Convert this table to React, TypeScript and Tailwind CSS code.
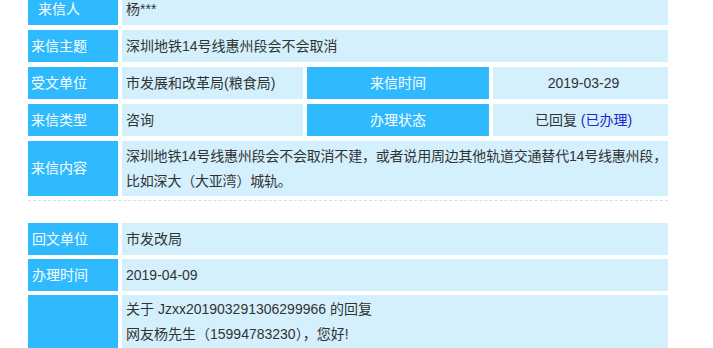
// 信件详情：来信信息 + 回复信息 两张表
import React from "react";

const FONT = "font-['Liberation_Sans','Noto_Sans_CJK_SC',sans-serif]";

// 蓝底白字的标签格
function Label({ children, className = "" }: { children?: React.ReactNode; className?: string }) {
  return (
    <div className={`flex items-center bg-[#2fbaff] text-[14px] text-white ${className}`}>
      {children}
    </div>
  );
}

// 浅蓝底的内容格
function Value({ children, className = "" }: { children?: React.ReactNode; className?: string }) {
  return (
    <div className={`flex items-center bg-[#d4f0fd] text-[14px] text-[#333] ${className}`}>
      {children}
    </div>
  );
}

export default function App() {
  return (
    <div className={`h-[348px] w-[713px] overflow-hidden bg-white ${FONT}`}>
      <div className="ml-[28px] w-[640px]">
        {/* 来信信息 */}
        <div className="-mt-[7px] grid auto-rows-[32px] grid-cols-[90px_181px_182px_175px] gap-x-[4px] gap-y-[5px]">
          <Label className="pl-[10px]">来信人</Label>
          <Value className="col-span-3 pl-[4px]">杨***</Value>

          <Label className="pl-[3px]">来信主题</Label>
          <Value className="col-span-3 pl-[4px]">深圳地铁14号线惠州段会不会取消</Value>

          <Label className="pl-[3px]">受文单位</Label>
          <Value className="pl-[4px]">市发展和改革局(粮食局)</Value>
          <Label className="justify-center">来信时间</Label>
          <Value className="justify-center pl-[6px]">2019-03-29</Value>

          <Label className="pl-[3px]">来信类型</Label>
          <Value className="pl-[4px]">咨询</Value>
          <Label className="justify-center">办理状态</Label>
          <Value className="justify-center pl-[6px]">
            已回复&nbsp;<span className="text-[#2424cc]">(已办理)</span>
          </Value>

          <Label className="h-[55px] pl-[3px]">来信内容</Label>
          <Value className="col-span-3 h-[55px] pl-[4px] leading-[25px]">
            {/* 换行位置按原页面固定 */}
            <p className="whitespace-nowrap tracking-[-0.2px]">
              深圳地铁14号线惠州段会不会取消不建，或者说用周边其他轨道交通替代14号线惠州段，
              <br />
              比如深大（大亚湾）城轨。
            </p>
          </Value>
        </div>

        <div className="mt-[27px] border-t border-dashed border-[#c6e6f8]" />

        {/* 回复信息 */}
        <div className="mt-[22px] grid auto-rows-[32px] grid-cols-[90px_546px] gap-x-[4px] gap-y-[4px]">
          <Label className="pl-[4px]">回文单位</Label>
          <Value className="pl-[4px]">市发改局</Value>

          <Label className="pl-[4px]">办理时间</Label>
          <Value className="pl-[4px]">2019-04-09</Value>

          <Label className="h-[80px]" />
          <Value className="h-[80px] flex-col !items-start pl-[4px] pt-[2px] leading-[25px]">
            <p>关于 Jzxx201903291306299966 的回复</p>
            <p>网友杨先生（15994783230），您好!</p>
          </Value>
        </div>
      </div>
    </div>
  );
}
